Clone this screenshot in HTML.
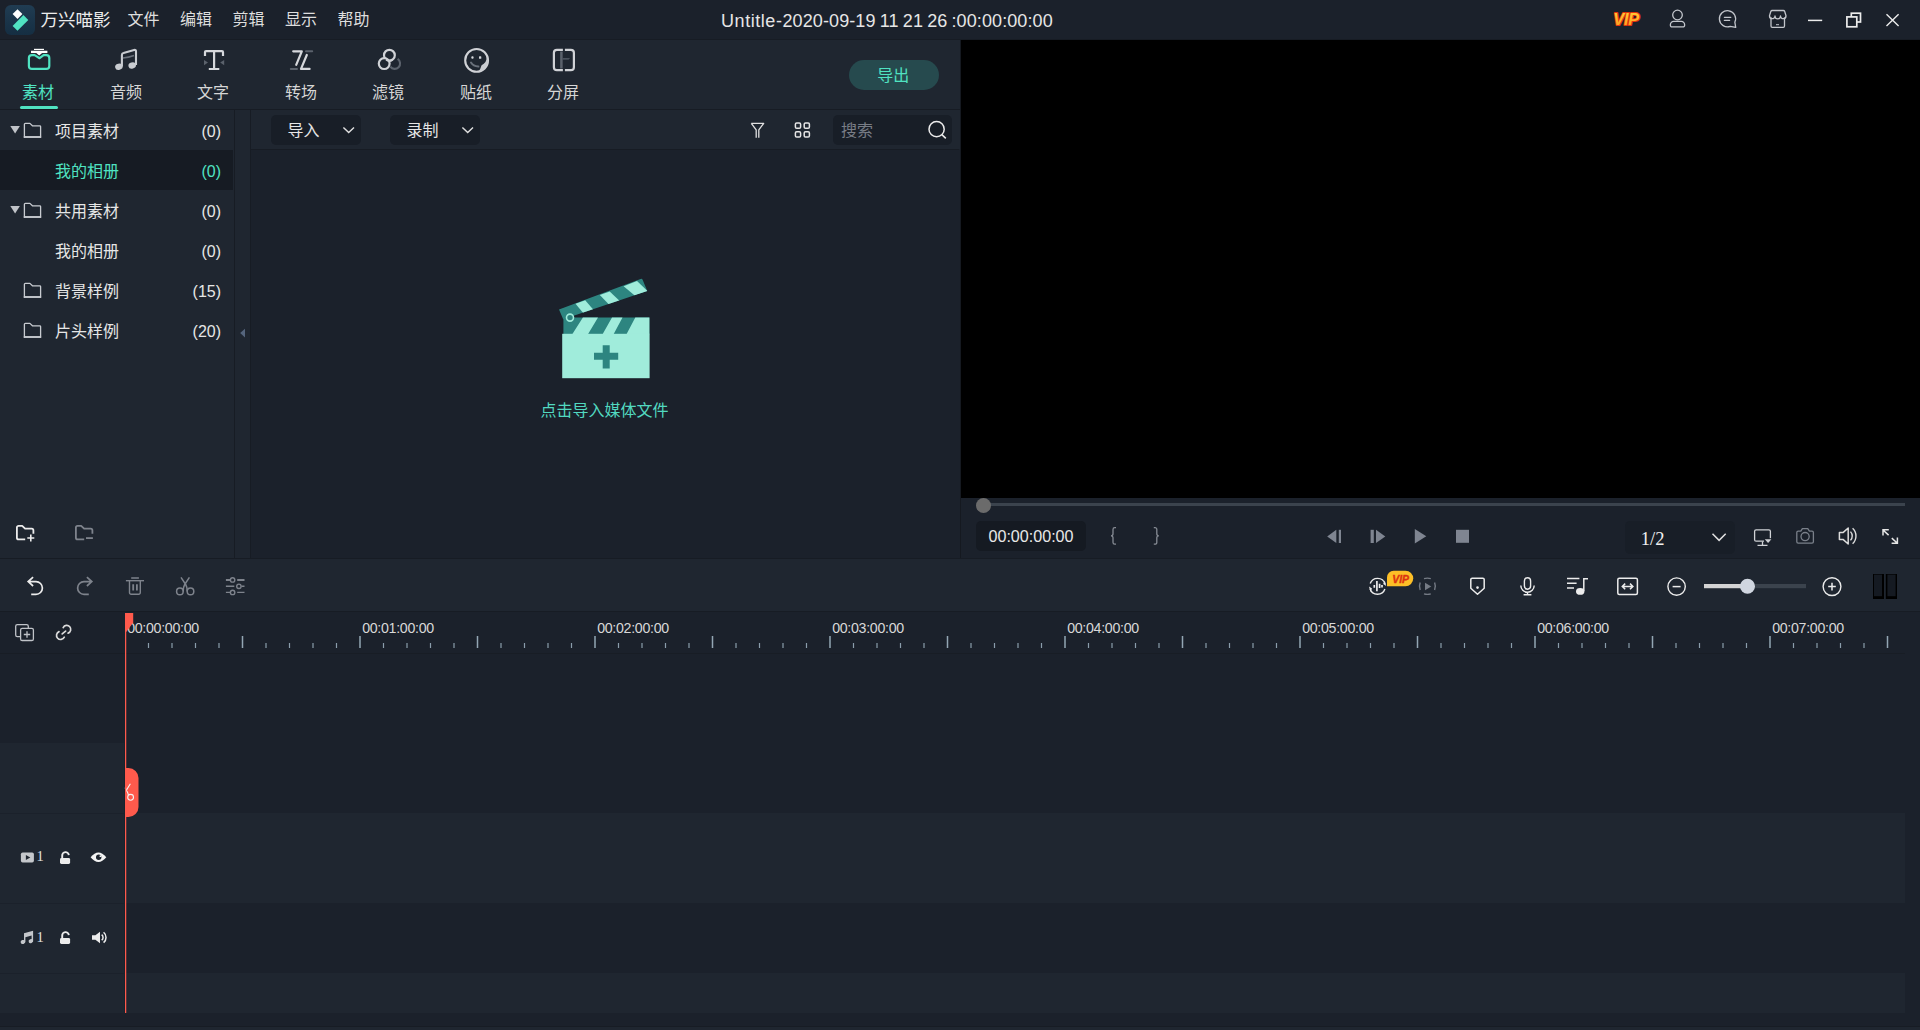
<!DOCTYPE html>
<html lang="zh-CN">
<head>
<meta charset="utf-8">
<title>万兴喵影</title>
<style>
html,body{margin:0;padding:0;}
body{width:1920px;height:1030px;background:#1b212b;position:relative;overflow:hidden;
 font-family:"Liberation Sans","Noto Sans CJK SC",sans-serif;color:#e0e0e0;font-size:16px;}
.a{position:absolute;}
.t{position:absolute;white-space:nowrap;line-height:1;}
svg{position:absolute;overflow:visible;}
.menu{font-size:16px;color:#dedede;top:12px;margin-left:0.5px;}
.tab{font-size:16px;color:#d6d6d6;top:85px;width:60px;text-align:center;}
.row{font-size:16px;color:#e6e6e6;}
.cnt{font-size:16px;color:#e6e6e6;text-align:right;width:60px;}
.rl{font-size:14.2px;letter-spacing:-0.3px;color:#d8d8d8;top:620.6px;}
</style>
</head>
<body>
<!-- ===== title bar ===== -->
<div class="a" style="left:0;top:0;width:1920px;height:39px;background:#1b212b;"></div>
<div class="a" style="left:0;top:39px;width:1920px;height:1px;background:#171c24;"></div>
<svg style="left:5px;top:5px;" width="30" height="30" viewBox="0 0 30 30">
 <defs><linearGradient id="lg" x1="0" y1="0" x2="0" y2="1"><stop offset="0" stop-color="#203c52"/><stop offset="1" stop-color="#152e42"/></linearGradient></defs>
 <rect width="30" height="30" rx="6" fill="url(#lg)"/>
 <path d="M12.5 4.2 L17.4 9.1 L12.5 14 L7.6 9.1 Z" fill="#ffffff"/>
 <path d="M18.4 10.1 L23.3 15 L12.5 25.8 L7.6 20.9 Z" fill="#50e3c2"/>
</svg>
<div class="t" style="left:40.5px;top:11.5px;font-size:17.5px;color:#ececec;">万兴喵影</div>
<div class="t menu" style="left:127px;">文件</div>
<div class="t menu" style="left:179.5px;">编辑</div>
<div class="t menu" style="left:232px;">剪辑</div>
<div class="t menu" style="left:284.5px;">显示</div>
<div class="t menu" style="left:337px;">帮助</div>
<div class="t" id="ttl" style="left:721px;top:11.6px;font-size:18px;letter-spacing:0.1px;color:#e6e6e6;"><span style="letter-spacing:0.56px">Untitle-</span>2020-09-19<span style="word-spacing:-0.95px"> 11 21 26 </span>:00:00:00:00</div>
<!-- title right icons -->
<svg style="left:1608px;top:6px;" width="40" height="28" viewBox="0 0 40 28">
 <defs><linearGradient id="vg" x1="0" y1="0" x2="0" y2="1"><stop offset="0" stop-color="#ffd23a"/><stop offset="1" stop-color="#ff9a1c"/></linearGradient></defs>
 <text x="5.3" y="19" font-family="Liberation Sans, sans-serif" font-weight="bold" font-style="italic" font-size="16.5" fill="url(#vg)" stroke="#e5340c" stroke-width="2" paint-order="stroke" stroke-linejoin="round" letter-spacing="-0.3">VIP</text>
</svg>
<svg style="left:1665px;top:5px;" width="26" height="28" viewBox="0 0 26 28" fill="none" stroke="#c3c6cc" stroke-width="1.3">
 <circle cx="12.5" cy="10" r="4.8"/>
 <path d="M5.4 20.4 v-0.8 a3.2 3.2 0 0 1 3.2 -3.2 h7.8 a3.2 3.2 0 0 1 3.2 3.2 v0.8 a1.5 1.5 0 0 1 -1.5 1.5 h-11.2 a1.5 1.5 0 0 1 -1.5 -1.5 z" stroke-linejoin="round"/>
</svg>
<svg style="left:1715px;top:5px;" width="26" height="28" viewBox="0 0 26 28" fill="none" stroke="#c3c6cc" stroke-width="1.3" stroke-linecap="round">
 <path d="M19.84 17.17 A8.1 8.1 0 1 0 15.27 21.36 L20.7 22.4 Z" stroke-linejoin="round"/>
 <path d="M9.4 12.3 h6.4 M9.4 15.4 h5.2"/>
</svg>
<svg style="left:1765px;top:5px;" width="26" height="28" viewBox="0 0 26 28" fill="none" stroke="#c3c6cc" stroke-width="1.3" stroke-linejoin="round">
 <path d="M6 12.5 v8.6 a1.2 1.2 0 0 0 1.2 1.2 h11.1 a1.2 1.2 0 0 0 1.2 -1.2 v-8.6"/>
 <path d="M7.2 5.5 h11.1 a1.5 1.5 0 0 1 1.4 1 l1.3 4.2 a2.75 2.9 0 0 1 -5.5 0.2 a2.75 2.9 0 0 1 -5.5 0 a2.75 2.9 0 0 1 -5.5 -0.2 l1.3 -4.2 a1.5 1.5 0 0 1 1.4 -1 z"/>
 <path d="M11 19.7 h3" stroke-width="1"/>
</svg>
<svg style="left:1800px;top:5px;" width="110" height="28" viewBox="0 0 110 28" fill="none" stroke="#ececec">
 <path d="M8 15.4 h14.2" stroke-width="1.5"/>
 <rect x="51.3" y="8.2" width="9.2" height="8.8" stroke-width="1.7"/>
 <rect x="46.9" y="11.9" width="9.9" height="9.9" stroke-width="1.7" fill="#1b212b"/>
 <path d="M86.5 9.3 L98.6 21 M98.6 9.3 L86.5 21" stroke-width="1.4"/>
</svg>
<!-- ===== tab bar ===== -->
<div class="a" style="left:0;top:40px;width:960px;height:69px;background:#1f2630;"></div>
<div class="a" style="left:0;top:109px;width:960px;height:1px;background:#171c24;"></div>
<div class="a" style="left:960px;top:40px;width:1px;height:518px;background:#151920;"></div>
<svg style="left:0;top:40px;" width="960" height="70" viewBox="0 40 960 70" fill="none">
 <!-- media -->
 <path d="M34 49.4 h10" stroke="#ffffff" stroke-width="1.2"/>
 <path d="M31 51.9 h16.4" stroke="#ffffff" stroke-width="2.3"/>
 <path d="M36.3 53 h5.8 l-2.9 2.6 z" fill="#ffffff"/>
 <path d="M34.6 55.1 h-2.7 a3 3 0 0 0 -3 3 v7.8 a3 3 0 0 0 3 3 h14.4 a3 3 0 0 0 3 -3 v-7.8 a3 3 0 0 0 -3 -3 h-2.7 l-4 3.1 z" stroke="#50e3c2" stroke-width="2.2" stroke-linejoin="round"/>
 <!-- audio -->
 <g fill="#c9ccd1" stroke="none">
  <ellipse cx="118.9" cy="66.7" rx="3.8" ry="3.1" transform="rotate(-15 118.9 66.7)"/>
  <ellipse cx="132.2" cy="65.5" rx="3.8" ry="3.1" transform="rotate(-15 132.2 65.5)"/>
 </g>
 <path d="M121.9 66.5 V55 q0 -1.6 1.6 -2 l10.6 -3 q1.9 -0.5 1.9 1.4 V65" stroke="#c9ccd1" stroke-width="2.1" stroke-linejoin="round"/>
 <path d="M123 58 q5.5 -0.6 11 -2.6" stroke="#6a717b" stroke-width="1.6"/>
 <!-- text -->
 <path d="M205 56 v-3.9 a1 1 0 0 1 1 -1 h16 a1 1 0 0 1 1 1 V56 M214.1 51.1 V69 M208.8 69 h10.5" stroke="#d6d8dc" stroke-width="2.2" stroke-linejoin="round"/>
 <path d="M204 59.9 l4 2.7 l-4 2.7 z M224.2 59.9 l-4 2.7 l4 2.7 z" fill="#5b626c"/>
 <!-- transition -->
 <path d="M293.2 51.3 h8.6 l-5.6 13.5" stroke="#d6d8dc" stroke-width="2.2" stroke-linejoin="round" stroke-linecap="round"/>
 <path d="M306.8 55 l-5.8 13.9 h8.6" stroke="#d6d8dc" stroke-width="2.2" stroke-linejoin="round" stroke-linecap="round"/>
 <path d="M306 51.3 h6.2 M290.8 69 h6.2" stroke="#5b626c" stroke-width="2" stroke-linecap="round"/>
 <!-- filter -->
 <path d="M397.6 58.9 A5.4 5.4 0 1 1 390.3 66.6" stroke="#5b626c" stroke-width="2.1"/>
 <circle cx="389.4" cy="55.2" r="5.4" stroke="#d0d2d6" stroke-width="2.2"/>
 <circle cx="384.2" cy="63.6" r="5.4" stroke="#d0d2d6" stroke-width="2.2" fill="#1f2630"/>
 <path d="M386.2 59.6 A5.4 5.4 0 0 0 392.6 59.55" stroke="#d0d2d6" stroke-width="2.2"/>
 <!-- sticker -->
 <circle cx="476.6" cy="60.4" r="11.4" stroke="#d0d2d6" stroke-width="2.1"/>
 <path d="M487.2 56.2 Q486.6 63 481.6 65.2 Q480.6 68.8 478.4 71.7 A11.4 11.4 0 0 0 487.2 56.2 z" fill="#c9ccd1"/>
 <rect x="471.3" y="56.3" width="2.3" height="2.5" rx="1" fill="#d6d8dc"/>
 <rect x="479" y="56.3" width="2.3" height="2.5" rx="0.6" fill="#d6d8dc"/>
 <path d="M471 62.6 q2.2 3.6 7.4 4" stroke="#6a717b" stroke-width="2" stroke-linecap="round"/>
 <!-- split -->
 <path d="M562.9 49.8 h-6 a3 3 0 0 0 -3 3 v14.4 a3 3 0 0 0 3 3 h6 M564.9 49.8 h6 a3 3 0 0 1 3 3 v14.4 a3 3 0 0 1 -3 3 h-6" stroke="#d0d2d6" stroke-width="2.2"/>
 <path d="M561.4 51.5 V68.5" stroke="#5b626c" stroke-width="2.5"/>
 <path d="M562.7 58.2 h7.4 l-1.6 1.3 h-5.8 z" fill="#5b626c"/>
</svg>
<div class="t tab" style="left:8px;color:#50e3c2;">素材</div>
<div class="t tab" style="left:96px;">音频</div>
<div class="t tab" style="left:183px;">文字</div>
<div class="t tab" style="left:271px;">转场</div>
<div class="t tab" style="left:358px;">滤镜</div>
<div class="t tab" style="left:446px;">贴纸</div>
<div class="t tab" style="left:533px;">分屏</div>
<div class="a" style="left:20px;top:106px;width:38px;height:3px;border-radius:1.5px;background:#50e3c2;"></div>
<div class="a" style="left:849px;top:60px;width:90px;height:30px;border-radius:15px;background:#264a4e;"></div>
<div class="t" style="left:848.2px;top:67.8px;width:90px;text-align:center;font-size:16px;color:#50e3c2;">导出</div>
<!-- ===== left tree panel ===== -->
<div class="a" style="left:0;top:110px;width:234px;height:448px;background:#1f2630;"></div>
<div class="a" style="left:0;top:150px;width:233px;height:40px;background:#161b23;"></div>
<div class="a" style="left:234px;top:110px;width:1px;height:448px;background:#171c24;"></div>
<div class="a" style="left:235px;top:110px;width:15px;height:448px;background:#1f2630;"></div>
<div class="a" style="left:250px;top:110px;width:1px;height:448px;background:#171c24;"></div>
<svg style="left:0;top:110px;" width="250" height="447" viewBox="0 110 250 447" fill="none">
 <defs>
  <g id="fold"><path d="M0.7 15 V1.6 a0.9 0.9 0 0 1 0.9 -0.9 h4.6 l2.5 2.4 h7.3 a0.9 0.9 0 0 1 0.9 0.9 V15" stroke="#c8cbd0" stroke-width="1.3" stroke-linejoin="round"/><path d="M0.1 14.3 h17.3" stroke="#c8cbd0" stroke-width="1.9"/></g>
  <path id="tri" d="M0 0 h9.6 l-4.8 7.6 z" fill="#c0c3c8"/>
 </defs>
 <use href="#tri" x="10.3" y="126"/>
 <use href="#fold" x="23.7" y="122.7"/>
 <use href="#tri" x="10.3" y="206"/>
 <use href="#fold" x="23.7" y="202.7"/>
 <use href="#fold" x="23.7" y="282.7"/>
 <use href="#fold" x="23.7" y="322.7"/>
 <!-- collapse arrow -->
 <path d="M245 328.8 v8.6 l-4.8 -4.3 z" fill="#55657d"/>
 <!-- add / remove folder -->
 <path d="M25.2 539.4 h-6.6 a1.7 1.7 0 0 1 -1.7 -1.7 v-10.1 a1.7 1.7 0 0 1 1.7 -1.7 h3.6 l2.9 2.8 h6.6 a1.7 1.7 0 0 1 1.7 1.7 v3.4" stroke="#ececec" stroke-width="1.8" stroke-linejoin="round"/>
 <path d="M27.3 538 h7 M30.8 534.5 v7" stroke="#ececec" stroke-width="1.6"/>
 <path d="M84.2 539.4 h-6.6 a1.7 1.7 0 0 1 -1.7 -1.7 v-10.1 a1.7 1.7 0 0 1 1.7 -1.7 h3.6 l2.9 2.8 h6.6 a1.7 1.7 0 0 1 1.7 1.7 v3.4" stroke="#7e838c" stroke-width="1.8" stroke-linejoin="round"/>
 <path d="M86 538.1 h6.9" stroke="#7e838c" stroke-width="1.8"/>
</svg>
<div class="t row" style="left:55px;top:123.7px;">项目素材</div>
<div class="t cnt" style="left:161px;top:123.7px;">(0)</div>
<div class="t row" style="left:55px;top:163.7px;color:#50e3c2;">我的相册</div>
<div class="t cnt" style="left:161px;top:163.7px;color:#50e3c2;">(0)</div>
<div class="t row" style="left:55px;top:203.7px;">共用素材</div>
<div class="t cnt" style="left:161px;top:203.7px;">(0)</div>
<div class="t row" style="left:55px;top:243.7px;">我的相册</div>
<div class="t cnt" style="left:161px;top:243.7px;">(0)</div>
<div class="t row" style="left:55px;top:283.7px;">背景样例</div>
<div class="t cnt" style="left:161px;top:283.7px;">(15)</div>
<div class="t row" style="left:55px;top:323.7px;">片头样例</div>
<div class="t cnt" style="left:161px;top:323.7px;">(20)</div>
<!-- ===== media area ===== -->
<div class="a" style="left:251px;top:110px;width:709px;height:39px;background:#1f2630;"></div>
<div class="a" style="left:251px;top:149px;width:708px;height:1px;background:#171c24;"></div>
<div class="a" style="left:251px;top:150px;width:709px;height:408px;background:#1b212b;"></div>
<div class="a" style="left:271px;top:115px;width:90px;height:30px;border-radius:5px;background:#181e27;"></div>
<div class="a" style="left:390px;top:115px;width:90px;height:30px;border-radius:5px;background:#181e27;"></div>
<div class="a" style="left:833px;top:115px;width:119px;height:30px;border-radius:5px;background:#181e27;"></div>
<div class="t" style="left:287.5px;top:123px;font-size:16px;color:#e6e6e6;">导入</div>
<div class="t" style="left:406.5px;top:123px;font-size:16px;color:#e6e6e6;">录制</div>
<div class="t" style="left:841px;top:122.5px;font-size:16px;color:#787d86;">搜索</div>
<svg style="left:251px;top:110px;" width="709" height="40" viewBox="251 110 709 40" fill="none">
 <path d="M343.4 127.4 l5.3 5.2 l5.3 -5.2" stroke="#e0e0e0" stroke-width="1.4"/>
 <path d="M462.4 127.4 l5.3 5.2 l5.3 -5.2" stroke="#e0e0e0" stroke-width="1.4"/>
 <!-- filter -->
 <path d="M751.3 123.3 h12.4 l-4.9 6.6 v7.8 M751.3 123.3 l4.9 6.6 v7.8" stroke="#e0e0e0" stroke-width="1.3" stroke-linejoin="round"/>
 <!-- grid -->
 <g stroke="#e6e6e6" stroke-width="1.5">
  <rect x="795.4" y="122.9" width="5.2" height="5.4" rx="1.3"/>
  <rect x="804.2" y="122.9" width="5.2" height="5.4" rx="1.3"/>
  <rect x="795.4" y="131.7" width="5.2" height="5.4" rx="1.3"/>
  <rect x="804.2" y="131.7" width="5.2" height="5.4" rx="1.3"/>
 </g>
 <!-- search -->
 <circle cx="936.6" cy="129.2" r="7.6" stroke="#ececec" stroke-width="1.5"/>
 <path d="M941.9 134.6 l3.9 3.8" stroke="#ececec" stroke-width="1.5"/>
</svg>
<!-- clapboard -->
<svg style="left:555px;top:275px;" width="100" height="108" viewBox="555 275 100 108">
 <defs><clipPath id="armc"><path d="M559 309.6 L640.6 278.9 a1.6 1.6 0 0 1 2 0.9 L647.3 291 L563.2 319.2 z"/></clipPath></defs>
 <path d="M559 309.6 L640.6 278.9 a1.6 1.6 0 0 1 2 0.9 L647.3 291 L563.2 319.2 z" fill="#2d8580"/>
 <g clip-path="url(#armc)" fill="#a0ecdb">
  <path d="M575.5 303.8 L585.2 300.3 L593.4 309.8 L583.6 313.4 z"/>
  <path d="M599.8 295 L609.7 291.4 L620 301.2 L609.7 305.2 z"/>
  <path d="M623.6 286.3 L637 281 L648 291.5 L634.7 295.5 z"/>
 </g>
 <rect x="563.4" y="317.5" width="86" height="17" fill="#2d8580"/>
 <path d="M582.9 317.5 h15.1 l-9.9 16.5 h-15.7 z M612 317.5 h10.5 l-8.8 16.5 h-11 z M635.3 317.5 h14.1 v16.5 h-22.8 z" fill="#a0ecdb"/>
 <rect x="562.2" y="333.8" width="87.4" height="44.4" fill="#a0ecdb"/>
 <circle cx="570" cy="317.6" r="3.5" fill="#2d8580" stroke="#a0ecdb" stroke-width="1.6"/>
 <path d="M594 352.7 h24.2 v7 h-24.2 z M602.7 345.2 h7 v23.3 h-7 z" fill="#2d8580"/>
</svg>
<div class="t" style="left:540.5px;top:402.7px;font-size:16px;color:#52d9c0;">点击导入媒体文件</div>
<!-- ===== preview ===== -->
<div class="a" style="left:961px;top:40px;width:959px;height:458px;background:#000000;"></div>
<div class="a" style="left:961px;top:498px;width:959px;height:60px;background:#1b212b;"></div>
<div class="a" style="left:0;top:558px;width:1920px;height:1px;background:#171c24;"></div>
<div class="a" style="left:984px;top:503px;width:921px;height:3px;background:#3b434d;"></div>
<div class="a" style="left:976px;top:498px;width:15px;height:15px;border-radius:50%;background:#6b6b6b;"></div>
<div class="a" style="left:976px;top:521px;width:110px;height:30px;border-radius:5px;background:#151a22;"></div>
<div class="t" id="tc" style="left:976px;top:528px;width:110px;text-align:center;font-size:16.1px;color:#e8e8e8;">00:00:00:00</div>
<div class="a" style="left:1625px;top:521px;width:110px;height:33px;border-radius:5px;background:#181e27;"></div>
<div class="t" style="left:1640.8px;top:529.5px;font-family:'Liberation Serif',serif;font-size:18.5px;color:#f0f0f0;">1/2</div>
<svg style="left:961px;top:498px;" width="959" height="60" viewBox="961 498 959 60" fill="none">
 <!-- braces -->
 <path d="M1116 527.6 h-1.2 a1.8 1.8 0 0 0 -1.8 1.8 v4.4 a2 2 0 0 1 -2 2 a2 2 0 0 1 2 2 v4.6 a1.8 1.8 0 0 0 1.8 1.8 h1.2" stroke="#868b94" stroke-width="1.3"/>
 <path d="M1153.8 527.6 h1.2 a1.8 1.8 0 0 1 1.8 1.8 v4.4 a2 2 0 0 0 2 2 a2 2 0 0 0 -2 2 v4.6 a1.8 1.8 0 0 1 -1.8 1.8 h-1.2" stroke="#868b94" stroke-width="1.3"/>
 <!-- transport -->
 <g fill="#7f8591">
  <path d="M1336.3 529.8 v13.2 l-9.1 -6.6 z"/><rect x="1338.8" y="529.8" width="2.2" height="13.2"/>
  <rect x="1370.6" y="529.8" width="3.2" height="13.2"/><path d="M1376 529.8 v13.2 l9.3 -6.6 z"/>
  <path d="M1414.8 529 v14.6 l11.5 -7.3 z"/>
  <rect x="1456" y="529.8" width="13" height="13"/>
 </g>
 <path d="M1712.5 533.8 l6.6 6.6 l6.6 -6.6" stroke="#e0e0e0" stroke-width="1.5"/>
 <!-- monitor -->
 <rect x="1754.6" y="529.8" width="15.8" height="11.4" rx="1.5" stroke="#d0d2d6" stroke-width="1.3"/>
 <path d="M1762.5 541.5 v3.6 M1757.5 545.4 h10" stroke="#d0d2d6" stroke-width="1.3"/>
 <rect x="1764" y="538.2" width="8" height="5" fill="#1b212b"/>
 <path d="M1764.8 539.2 h6.6 l-3.3 3.7 z" fill="#d0d2d6"/>
 <!-- camera -->
 <path d="M1798.2 531.2 h2.6 l1.6 -2.6 h5.4 l1.6 2.6 h2.6 a1.4 1.4 0 0 1 1.4 1.4 v9.2 a1.4 1.4 0 0 1 -1.4 1.4 h-13.8 a1.4 1.4 0 0 1 -1.4 -1.4 v-9.2 a1.4 1.4 0 0 1 1.4 -1.4 z" stroke="#7a808a" stroke-width="1.3" stroke-linejoin="round"/>
 <circle cx="1805.1" cy="536.6" r="4.1" stroke="#7a808a" stroke-width="1.3"/>
 <!-- speaker -->
 <path d="M1839.4 532.6 h3.6 l5.2 -4.6 v16 l-5.2 -4.6 h-3.6 z" stroke="#dcdcdc" stroke-width="1.5" stroke-linejoin="round"/>
 <path d="M1850.5 531.6 a6.5 6.5 0 0 1 0 8.8 M1852.6 528.3 a10.5 10.5 0 0 1 0 15.4" stroke="#dcdcdc" stroke-width="1.4"/>
 <!-- fullscreen -->
 <path d="M1883 530 l5.6 5.1 M1891.8 538.1 l5.6 5.1 M1883 535.4 v-5.6 h5.8 M1897.4 537.6 v5.6 h-5.8" stroke="#e6e6e6" stroke-width="1.5"/>
</svg>
<!-- ===== timeline toolbar ===== -->
<div class="a" style="left:0;top:559px;width:1920px;height:52px;background:#1f2630;"></div>
<div class="a" style="left:0;top:611px;width:1920px;height:1px;background:#171c24;"></div>
<svg style="left:0;top:558px;" width="1920" height="54" viewBox="0 558 1920 54" fill="none">
 <!-- undo -->
 <path d="M33.1 577.2 l-4.9 4.4 l4.9 4.4 M28.4 581.6 h7.6 a6.4 6.4 0 0 1 0 12.8 h-4.8" stroke="#ececec" stroke-width="1.7"/>
 <!-- redo -->
 <path d="M86.9 577.2 l4.9 4.4 l-4.9 4.4 M91.6 581.6 h-7.6 a6.4 6.4 0 0 0 0 12.8 h4.8" stroke="#7e838c" stroke-width="1.7"/>
 <!-- trash -->
 <g stroke="#7e838c">
  <path d="M131.2 578 h7.7" stroke-width="1.5"/>
  <path d="M125.9 580.7 h18.1" stroke-width="1.4"/>
  <path d="M129.5 581 v11.6 a1.6 1.6 0 0 0 1.6 1.6 h7.6 a1.6 1.6 0 0 0 1.6 -1.6 v-11.6" stroke-width="1.4"/>
  <path d="M133.2 584.2 v6.2 M136.9 584.2 v6.2" stroke-width="1.8"/>
 </g>
 <!-- scissors -->
 <g stroke="#7e838c" stroke-width="1.5">
  <circle cx="179.9" cy="591.4" r="3.3"/>
  <circle cx="190.5" cy="591.4" r="3.3"/>
  <path d="M181 577.3 l4.7 7.2 q1.4 2.2 1.5 6.9 M189.4 577.3 l-4.7 7.2 q-1.4 2.2 -1.5 6.9"/>
 </g>
 <!-- adjust -->
 <g stroke="#7e838c">
  <path d="M225.9 579.9 h4.4 M237.2 579.9 h7.3" stroke-width="2"/>
  <circle cx="232.6" cy="579.9" r="2.2" stroke-width="1.4"/>
  <path d="M225.9 586.3 h8.4 M241.5 586.3 h3" stroke-width="1.5"/>
  <circle cx="238.9" cy="586.3" r="2.2" stroke-width="1.4"/>
  <path d="M225.9 592.4 h4.4 M237.2 592.4 h7.3" stroke-width="1.3"/>
  <circle cx="232.6" cy="592.4" r="2.2" stroke-width="1.4"/>
 </g>
 <!-- beat detect -->
 <g stroke="#ececec" stroke-width="1.4">
  <path d="M1370.2 583.6 A7.8 7.8 0 0 1 1385 583.9 M1384.9 589 A7.8 7.8 0 0 1 1370.1 588.7"/>
 </g>
 <path d="M1369 586.6 l1.4 5.4 l1.6 -3.4 z M1386.2 586 l-1.4 -5.4 l-1.6 3.4 z" fill="#ececec"/>
 <path d="M1376.9 581.1 v10.1 M1374.3 584.9 v2.8 M1379.6 583.7 v4.2 M1382 585.1 v2.3" stroke="#ececec" stroke-width="1.7"/>
 <!-- vip badge -->
 <path d="M1387 586.3 V577.4 a6.6 6.6 0 0 1 6.6 -6.6 h11.9 a7.75 7.75 0 0 1 0 15.5 z" fill="#fdbf27"/>
 <text x="1392.2" y="582.7" font-family="Liberation Sans, sans-serif" font-weight="bold" font-style="italic" font-size="10.5" fill="#dc3410" stroke="#dc3410" stroke-width="0.35">VIP</text>
 <!-- motion track (dim) -->
 <g stroke="#757b85" stroke-width="1.4">
  <path d="M1424 578.6 q3.4 -1 6.8 0 M1424 593.9 q3.4 1 6.8 0"/>
  <path d="M1420.2 582.6 q-1.5 3.7 0 7.4 M1434.6 582.6 q1.5 3.7 0 7.4"/>
 </g>
 <path d="M1425 582.8 v7.4 l6.3 -3.7 z" fill="#757b85"/>
 <!-- marker -->
 <path d="M1470.8 579.6 a1.4 1.4 0 0 1 1.4 -1.4 h10.6 a1.4 1.4 0 0 1 1.4 1.4 v8.6 l-6.7 6 l-6.7 -6 z" stroke="#ececec" stroke-width="1.5" stroke-linejoin="round"/>
 <circle cx="1477.5" cy="587.6" r="1.3" fill="#ececec"/>
 <!-- mic -->
 <rect x="1524.4" y="577.8" width="6.2" height="11.4" rx="3.1" stroke="#ececec" stroke-width="1.4"/>
 <path d="M1520.8 585.6 a6.7 6.7 0 0 0 13.4 0 M1527.5 592.4 v2.3 M1523.6 594.8 h7.8" stroke="#ececec" stroke-width="1.4"/>
 <!-- music list -->
 <path d="M1567 578.6 h12.4 M1567 583.3 h9.6 M1567 588 h7" stroke="#ececec" stroke-width="1.5"/>
 <path d="M1583.8 591 v-12.2 h4.2" stroke="#ececec" stroke-width="1.5"/>
 <ellipse cx="1580.2" cy="591.4" rx="4.2" ry="3.4" fill="#ececec"/>
 <!-- fit -->
 <rect x="1617.8" y="578.3" width="19.6" height="16.2" rx="1.5" stroke="#ececec" stroke-width="1.5"/>
 <path d="M1622.4 586.4 h10.6 M1625.2 583.6 l-2.9 2.8 l2.9 2.8 M1630 583.6 l2.9 2.8 l-2.9 2.8" stroke="#ececec" stroke-width="1.5"/>
 <!-- zoom out -->
 <circle cx="1676.6" cy="586.6" r="8.7" stroke="#ececec" stroke-width="1.4"/>
 <path d="M1672.6 586.6 h8" stroke="#ececec" stroke-width="1.5"/>
 <!-- slider -->
 <rect x="1704" y="584" width="102" height="4.2" fill="#3b434d"/>
 <rect x="1704" y="584" width="44" height="4.2" fill="#d4d4d4"/>
 <circle cx="1747.5" cy="586.2" r="7.5" fill="#d0d6e0"/>
 <!-- zoom in -->
 <circle cx="1832" cy="586.6" r="8.9" stroke="#ececec" stroke-width="1.4"/>
 <path d="M1828.2 586.6 h7.6 M1832 582.8 v7.6" stroke="#ececec" stroke-width="1.5"/>
 <!-- dark blocks -->
 <rect x="1873" y="574" width="11" height="25" fill="#000000"/>
 <rect x="1874" y="574.6" width="8" height="21.6" fill="#151a22"/>
 <rect x="1885.8" y="574" width="11.2" height="25" fill="#000000"/>
 <rect x="1887.4" y="574.6" width="8.2" height="21.6" fill="#151a22"/>
</svg>
<!-- ===== timeline ===== -->
<div class="a" style="left:0;top:612px;width:1920px;height:401px;background:#1b212b;"></div>
<div class="a" style="left:0;top:653px;width:1905px;height:1px;background:#181d25;"></div>
<!-- header bands -->
<div class="a" style="left:0;top:743px;width:124px;height:270px;background:#1f2630;"></div>
<div class="a" style="left:0;top:813px;width:124px;height:1px;background:#1b212b;"></div>
<div class="a" style="left:0;top:903px;width:124px;height:1px;background:#1b212b;"></div>
<div class="a" style="left:0;top:973px;width:124px;height:1px;background:#1b212b;"></div>
<!-- lanes -->
<div class="a" style="left:126px;top:813px;width:1779px;height:90px;background:#1f2630;"></div>
<div class="a" style="left:126px;top:973px;width:1779px;height:40px;background:#1f2630;"></div>
<!-- bottom strip -->
<div class="a" style="left:0;top:1013px;width:1920px;height:13px;background:#1b212b;"></div>
<div class="a" style="left:0;top:1026px;width:1920px;height:1px;background:#171c24;"></div>
<div class="a" style="left:0;top:1027px;width:1920px;height:3px;background:#1f2630;"></div>
<div class="t rl" style="left:127.2px;">00:00:00:00</div>
<div class="t rl" style="left:362.2px;">00:01:00:00</div>
<div class="t rl" style="left:597.2px;">00:02:00:00</div>
<div class="t rl" style="left:832.2px;">00:03:00:00</div>
<div class="t rl" style="left:1067.2px;">00:04:00:00</div>
<div class="t rl" style="left:1302.2px;">00:05:00:00</div>
<div class="t rl" style="left:1537.2px;">00:06:00:00</div>
<div class="t rl" style="left:1772.2px;">00:07:00:00</div>
<svg style="left:0;top:612px;" width="1920" height="402" viewBox="0 612 1920 402" fill="none">
 <path d="M148.50 643 V648 M172.00 643 V648 M195.50 643 V648 M219.00 643 V648 M266.00 643 V648 M289.50 643 V648 M313.00 643 V648 M336.50 643 V648 M383.50 643 V648 M407.00 643 V648 M430.50 643 V648 M454.00 643 V648 M501.00 643 V648 M524.50 643 V648 M548.00 643 V648 M571.50 643 V648 M618.50 643 V648 M642.00 643 V648 M665.50 643 V648 M689.00 643 V648 M736.00 643 V648 M759.50 643 V648 M783.00 643 V648 M806.50 643 V648 M853.50 643 V648 M877.00 643 V648 M900.50 643 V648 M924.00 643 V648 M971.00 643 V648 M994.50 643 V648 M1018.00 643 V648 M1041.50 643 V648 M1088.50 643 V648 M1112.00 643 V648 M1135.50 643 V648 M1159.00 643 V648 M1206.00 643 V648 M1229.50 643 V648 M1253.00 643 V648 M1276.50 643 V648 M1323.50 643 V648 M1347.00 643 V648 M1370.50 643 V648 M1394.00 643 V648 M1441.00 643 V648 M1464.50 643 V648 M1488.00 643 V648 M1511.50 643 V648 M1558.50 643 V648 M1582.00 643 V648 M1605.50 643 V648 M1629.00 643 V648 M1676.00 643 V648 M1699.50 643 V648 M1723.00 643 V648 M1746.50 643 V648 M1793.50 643 V648 M1817.00 643 V648 M1840.50 643 V648 M1864.00 643 V648" stroke="#8a9dab" stroke-width="1.2"/>
 <path d="M242.50 636 V648 M360.00 636 V648 M477.50 636 V648 M595.00 636 V648 M712.50 636 V648 M830.00 636 V648 M947.50 636 V648 M1065.00 636 V648 M1182.50 636 V648 M1300.00 636 V648 M1417.50 636 V648 M1535.00 636 V648 M1652.50 636 V648 M1770.00 636 V648 M1887.50 636 V648" stroke="#93a6b4" stroke-width="1.5"/>
 <!-- add track -->
 <rect x="15.7" y="624.7" width="12.6" height="12" rx="1.6" stroke="#c0c3c8" stroke-width="1.3"/>
 <rect x="20.6" y="628.3" width="12.8" height="12.2" rx="1.6" stroke="#c0c3c8" stroke-width="1.3" fill="#1b212b"/>
 <path d="M23.8 634.5 h6.4 M27 631.3 v6.4" stroke="#c0c3c8" stroke-width="1.3"/>
 <!-- link -->
 <g stroke="#dcdcdc" stroke-width="1.7" stroke-linecap="round">
  <path d="M63.19 627.58 A4 4 0 1 1 68.12 633.16"/>
  <path d="M59 631.63 A4.1 4.1 0 1 0 64.29 637.2"/>
  <path d="M62.2 633.9 L65.6 631.1"/>
 </g>
 <!-- scissor tab -->
 <path d="M125 768 h3.5 a10 10 0 0 1 10 10 v29 a10 10 0 0 1 -10 10 h-3.5 z" fill="#ff5a4c"/>
 <path d="M130.4 783.8 l-4.2 6.6 q1.6 1.6 2.2 4.4" stroke="#f4f4f4" stroke-width="1.1"/>
 <path d="M125 787.6 l1.8 2.8" stroke="#f4f4f4" stroke-width="1.1"/>
 <circle cx="130.6" cy="797.3" r="2.9" stroke="#f4f4f4" stroke-width="1.1"/>
 <!-- playhead -->
 <path d="M125 613 h8.2 v9.4 l-7 9.6 h-1.2 z" fill="#ff5a4c"/>
 <rect x="125" y="613" width="1.25" height="400" fill="#ff5a4c"/>
 <!-- video track header -->
 <rect x="20.9" y="852.5" width="13" height="9.9" rx="1.7" fill="#c4c7cb"/>
 <path d="M25.9 855 v5 l4.4 -2.5 z" fill="#1f2630"/>
 <g id="lock">
  <rect x="60" y="858.1" width="10.1" height="5.9" rx="1.4" fill="#ececec"/>
  <path d="M62.2 858.4 v-2.6 a3.3 3.4 0 0 1 6.6 -0.6" stroke="#ececec" stroke-width="1.9"/>
 </g>
 <path d="M90.6 857.2 q7.8 -9.6 15.7 0 q-7.9 9.6 -15.7 0 z" fill="#f4f4f4"/>
 <circle cx="98.7" cy="857.2" r="2.7" fill="#1f2630"/>
 <circle cx="100.4" cy="856.2" r="0.9" fill="#f4f4f4"/>
 <!-- audio track header -->
 <g fill="#c4c7cb">
  <ellipse cx="22.9" cy="942" rx="2.3" ry="2" transform="rotate(-20 22.9 942)"/>
  <ellipse cx="30.9" cy="941.1" rx="2.3" ry="2" transform="rotate(-20 30.9 941.1)"/>
  <path d="M24 933.2 l9.1 -2.4 v10.4 h-1.5 v-5.6 l-6.2 1.6 v5 h-1.4 z"/>
 </g>
 <use href="#lock" y="80"/>
 <path d="M92 935.2 h3.4 l4.6 -3.4 v11.4 l-4.6 -3.4 h-3.4 z" fill="#ececec"/>
 <path d="M101.7 934.6 a3.6 3.6 0 0 1 0 5.6 M103.6 932.2 a6.8 6.8 0 0 1 0 10.4" stroke="#ececec" stroke-width="1.5"/>
</svg>
<div class="t" style="left:36.6px;top:849.2px;font-family:'Liberation Serif',serif;font-size:14.5px;color:#e0e0e0;">1</div>
<div class="t" style="left:36.6px;top:929.6px;font-family:'Liberation Serif',serif;font-size:14.5px;color:#e0e0e0;">1</div>
</body>
</html>
